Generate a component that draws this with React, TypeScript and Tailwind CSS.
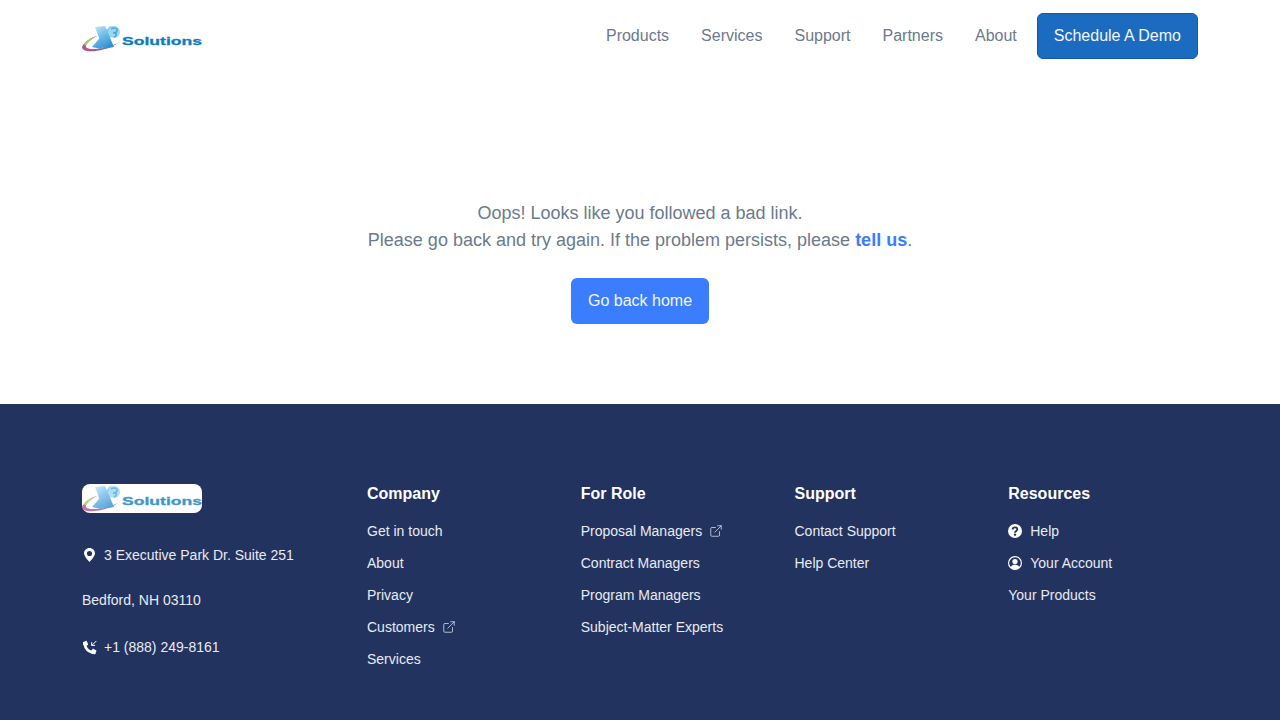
import { ExternalLink } from 'lucide-react';

const FONT = { fontFamily: '"Liberation Sans", Arial, sans-serif' };

// Company logo, drawn small like the raster in the original
function Logo({ id }: { id: string }) {
  return (
    <svg width="120" height="27" viewBox="0 0 120 27" className="block">
      <defs>
        <linearGradient id={`${id}-x`} x1="0" y1="0" x2="0.6" y2="1">
          <stop offset="0" stopColor="#c4e8f8" />
          <stop offset="0.5" stopColor="#6db9e8" />
          <stop offset="1" stopColor="#2f8fd2" />
        </linearGradient>
      </defs>
      {/* orbit swoosh */}
      <path d="M0 22 C2 17 8 13 15 11 C8 15 3 19 4 22 C6 25.500 20 25 36 18 C26 25 12 27 5 26 C2 25.500 0 24 0 22 Z" fill="#b2558f" />
      <path d="M1.500 19 C5 15 10 12.500 15 11 C10 14 6 17 4 20.500 Z" fill="#a9cf62" />
      {/* crossed bands of the mark */}
      <path d="M13 2 L23 1 L32 22 L21 24 Z" fill={`url(#${id}-x)`} />
      <path d="M28 1 L36 3 L19 24 L10 22 Z" fill={`url(#${id}-x)`} />
      <circle cx="32" cy="7" r="6" fill="#9bd8f3" />
      <path d="M29 4 C32 2 36 3 35 6 C34.500 8 32 8 31 8 M32 8 C35 8 35 11 32 12" fill="none" stroke="#4aa3dc" strokeWidth="1.500" />
      <text x="40" y="20" fontSize="11.5" fontWeight="700" fill="#0f7cc0" stroke="#0f7cc0" strokeWidth="0.3" textLength="80" lengthAdjust="spacingAndGlyphs" style={FONT}>Solutions</text>
    </svg>
  );
}

function PinIcon() {
  return (
    <svg width="11" height="14" viewBox="3 1 18 23">
      <path fill="#fff" fillRule="evenodd" d="M12 1C7 1 3 4.900 3 9.800 3 15.600 12 24 12 24s9-8.400 9-14.200C21 4.900 17 1 12 1Zm0 4.800a4.200 4.200 0 1 1 0 8.400 4.200 4.200 0 0 1 0-8.400Z" />
    </svg>
  );
}

function PhoneIcon() {
  return (
    <svg width="15" height="15" viewBox="0 0 24 24" className="shrink-0">
      <path fill="none" stroke="#fff" strokeWidth="4.500" strokeLinecap="round" d="M4.500 7C5.500 13.500 10.500 18.500 17.500 20" />
      <path fill="#fff" d="M1.500 3.500 6 1.500c.7-.3 1.300 0 1.600.6l2 4.200c.3.600.1 1.200-.4 1.600L5 10.500 1.800 7ZM14.500 17.500l2.500-3c.4-.5 1-.6 1.600-.3l3.800 2.200c.6.300.8 1 .6 1.600l-1.500 4c-.3.700-.9 1-1.600.9L15 21.500Z" />
      <path fill="none" stroke="#fff" strokeWidth="1.600" d="M23 1.500l-7 7M15.500 3.500v5.200h5.200" />
    </svg>
  );
}

function HelpIcon() {
  return (
    <svg width="14" height="14" viewBox="0 0 24 24">
      <circle cx="12" cy="12" r="12" fill="#fff" />
      <path fill="none" stroke="#223360" strokeWidth="3.200" d="M8 9.500C8 7 9.800 5.800 12 5.800s4 1.300 4 3.300c0 3-4 2.800-4 5.900" />
      <circle cx="12" cy="18.300" r="2" fill="#223360" />
    </svg>
  );
}

function AccountIcon() {
  return (
    <svg width="14" height="14" viewBox="0 0 24 24" fill="none" stroke="#fff">
      <circle cx="12" cy="12" r="11" strokeWidth="2" />
      <circle cx="12" cy="9.500" r="4.500" fill="#fff" stroke="none" />
      <path d="M4.500 19.500C6 16 9 15 12 15s6 1 7.500 4.500C17.500 21.800 15 23 12 23s-5.500-1.200-7.500-3.500Z" fill="#fff" stroke="none" />
    </svg>
  );
}

const NAV = ['Products', 'Services', 'Support', 'Partners', 'About'];

function FooterLink({ label, external, icon }: { label: string; external?: boolean; icon?: React.ReactNode }) {
  return (
    <li className="flex h-8 items-center text-sm text-[#e9ebf1]">
      {icon && <span className="mr-2 flex w-[14px] justify-center">{icon}</span>}
      <span>{label}</span>
      {external && <ExternalLink size={14} strokeWidth={1.25} className="ml-[7px]" />}
    </li>
  );
}

function FooterColumn({ title, children }: { title: string; children: React.ReactNode }) {
  return (
    <div>
      <h4 className="mb-[11px] h-5 text-base leading-5 font-bold text-white">{title}</h4>
      <ul>{children}</ul>
    </div>
  );
}

export default function App() {
  return (
    <div className="flex h-[720px] flex-col overflow-hidden bg-white antialiased" style={FONT}>
      <header className="flex h-[72px] items-start justify-between px-[82px] pt-[13px]">
        <div className="pt-[12px]">
          <Logo id="top" />
        </div>
        <div className="flex items-center gap-5">
          <nav className="flex items-center gap-8">
            {NAV.map((item) => (
              <a key={item} className="text-base text-[#6b7a8c]">
                {item}
              </a>
            ))}
          </nav>
          <button className="h-[46px] rounded-md border border-[#17579f] bg-[#1b6cc1] px-4 text-base text-[#f3f6fb]">
            Schedule A Demo
          </button>
        </div>
      </header>

      <main className="flex h-[332px] flex-col items-center pt-[128px] text-center text-lg leading-[27px] text-[#6b7a8c]">
        <p>Oops! Looks like you followed a bad link.</p>
        <p>
          Please go back and try again. If the problem persists, please{' '}
          <a className="font-bold text-[#3b7bff]">tell us</a>.
        </p>
        <button className="mt-[24px] h-[46px] rounded-md bg-[#3b7dff] px-[17px] text-base text-[#f3f6fb]">
          Go back home
        </button>
      </main>

      <footer className="flex-1 bg-[#223360] px-[82px] pt-20">
        <div className="grid grid-cols-[261px_repeat(4,1fr)] gap-x-6">
          <div className="text-sm text-[#e9ebf1]">
            <div className="w-fit rounded-lg bg-white pt-px pb-px">
              <div className="opacity-80">
                <Logo id="foot" />
              </div>
            </div>
            <p className="mt-[34px] flex h-4 items-center">
              <span className="mr-2 flex w-[14px] justify-center"><PinIcon /></span>
              3 Executive Park Dr. Suite 251
            </p>
            <p className="mt-[29px] h-4 leading-4">Bedford, NH 03110</p>
            <p className="mt-[31px] flex h-4 items-center">
              <span className="mr-2 flex w-[14px] justify-start"><PhoneIcon /></span>
              +1 (888) 249-8161
            </p>
          </div>
          <FooterColumn title="Company">
            <FooterLink label="Get in touch" />
            <FooterLink label="About" />
            <FooterLink label="Privacy" />
            <FooterLink label="Customers" external />
            <FooterLink label="Services" />
          </FooterColumn>
          <FooterColumn title="For Role">
            <FooterLink label="Proposal Managers" external />
            <FooterLink label="Contract Managers" />
            <FooterLink label="Program Managers" />
            <FooterLink label="Subject-Matter Experts" />
          </FooterColumn>
          <FooterColumn title="Support">
            <FooterLink label="Contact Support" />
            <FooterLink label="Help Center" />
          </FooterColumn>
          <FooterColumn title="Resources">
            <FooterLink label="Help" icon={<HelpIcon />} />
            <FooterLink label="Your Account" icon={<AccountIcon />} />
            <FooterLink label="Your Products" />
          </FooterColumn>
        </div>
      </footer>
    </div>
  );
}
